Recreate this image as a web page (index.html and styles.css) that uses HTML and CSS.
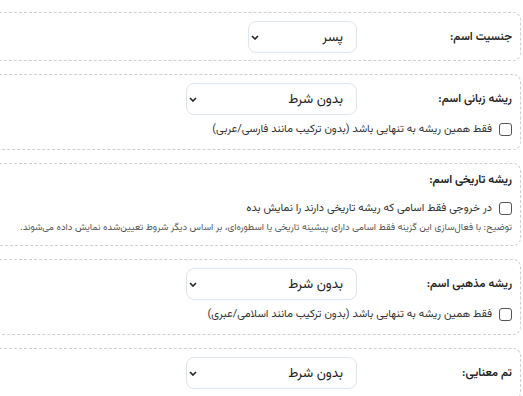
FILE: index.html
```html
<!DOCTYPE html>
<html lang="fa" dir="rtl">
<head>
<meta charset="utf-8">
<title>فیلتر اسم</title>
<link rel="stylesheet" href="styles.css">
</head>
<body>
<div class="form">
  <section class="card">
    <div class="row">
      <span class="label">جنسیت اسم:</span>
      <div class="select select-sm"><span>پسر</span><svg class="chev" width="8" height="5" viewBox="0 0 8 5"><path d="M1 1l3 3 3-3" fill="none" stroke="#222" stroke-width="1.6"/></svg></div>
    </div>
  </section>

  <section class="card">
    <div class="row">
      <span class="label">ریشه زبانی اسم:</span>
      <div class="select"><span>بدون شرط</span><svg class="chev" width="8" height="5" viewBox="0 0 8 5"><path d="M1 1l3 3 3-3" fill="none" stroke="#222" stroke-width="1.6"/></svg></div>
    </div>
    <label class="check"><span class="box"></span><span>فقط همین ریشه به تنهایی باشد (بدون ترکیب مانند فارسی/عربی)</span></label>
  </section>

  <section class="card card-hist">
    <div class="heading">ریشه تاریخی اسم:</div>
    <label class="check"><span class="box"></span><span>در خروجی فقط اسامی که ریشه تاریخی دارند را نمایش بده</span></label>
    <p class="note">توضیح: با فعال‌سازی این گزینه فقط اسامی دارای پیشینه تاریخی یا اسطوره‌ای، بر اساس دیگر شروط تعیین‌شده نمایش داده می‌شوند.</p>
  </section>

  <section class="card">
    <div class="row">
      <span class="label">ریشه مذهبی اسم:</span>
      <div class="select"><span>بدون شرط</span><svg class="chev" width="8" height="5" viewBox="0 0 8 5"><path d="M1 1l3 3 3-3" fill="none" stroke="#222" stroke-width="1.6"/></svg></div>
    </div>
    <label class="check"><span class="box"></span><span>فقط همین ریشه به تنهایی باشد (بدون ترکیب مانند اسلامی/عبری)</span></label>
  </section>

  <section class="card">
    <div class="row">
      <span class="label">تم معنایی:</span>
      <div class="select"><span>بدون شرط</span><svg class="chev" width="8" height="5" viewBox="0 0 8 5"><path d="M1 1l3 3 3-3" fill="none" stroke="#222" stroke-width="1.6"/></svg></div>
    </div>
  </section>
</div>
</body>
</html>
```

FILE: styles.css
```css
html, body {
  margin: 0;
  padding: 0;
  background: #fff;
}
body {
  direction: rtl;
  font-family: "Vazirmatn", "Noto Sans Arabic", "DejaVu Sans", sans-serif;
  color: #222;
  overflow: hidden;
}
.form {
  width: 560px;
  margin-right: 2px;
  padding-top: 12px;
  display: flex;
  flex-direction: column;
  gap: 13px;
}
.card {
  border: 1px dashed #cfcfcf;
  border-radius: 8px;
  padding: 8px 8px 10px;
  display: flex;
  flex-direction: column;
  gap: 4px;
}
.card:first-child {
  padding-bottom: 7px;
}
.card-hist {
  padding-top: 6px;
  padding-bottom: 9px;
  gap: 2px;
}
.card-hist .heading {
  margin-bottom: 6px;
}
.row {
  display: flex;
  align-items: center;
}
.label {
  width: 155px;
  font-size: 11.5px;
  font-weight: 600;
  color: #222;
}
.select {
  width: 171px;
  height: 32px;
  box-sizing: border-box;
  border: 1px solid #dfe5ec;
  border-radius: 8px;
  display: flex;
  align-items: center;
  justify-content: space-between;
  padding: 0 13px 0 2px;
  font-size: 13.5px;
  color: #222;
}
.select-sm {
  width: 109px;
}
.chev {
  display: block;
}
.check {
  display: flex;
  align-items: center;
  gap: 7px;
  font-size: 11px;
  color: #333;
  height: 20px;
}
.box {
  width: 11px;
  height: 11px;
  border: 1px solid #555;
  border-radius: 3px;
  flex: none;
}
.heading {
  font-size: 11.5px;
  font-weight: 700;
  line-height: 20px;
  color: #222;
}
.note {
  margin: 0;
  font-size: 9.6px;
  color: #555;
  line-height: 16px;
  white-space: nowrap;
}
```
